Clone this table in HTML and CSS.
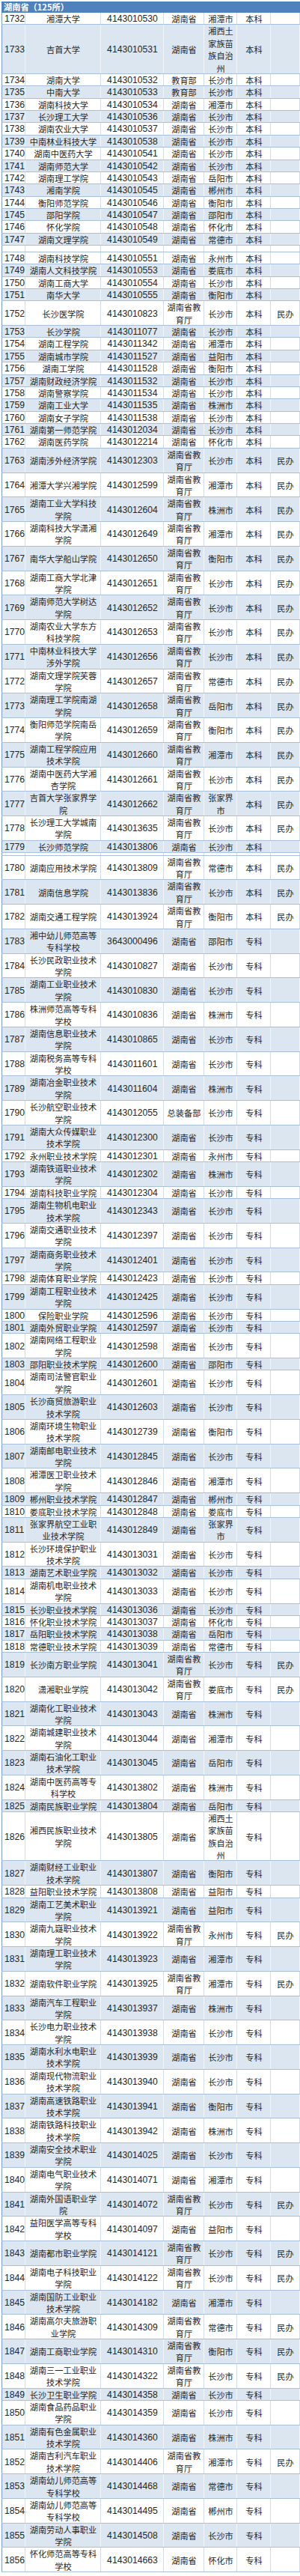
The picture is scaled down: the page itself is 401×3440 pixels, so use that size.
FILE: index.html
```html
<!DOCTYPE html>
<html lang="zh-CN">
<head>
<meta charset="utf-8">
<title>湖南省（125所）</title>
<link rel="stylesheet" href="styles.css">
</head>
<body>
<div class="sheet">
<table class="list">
<colgroup><col class="w1"><col class="w2"><col class="w3"><col class="w4"><col class="w5"><col class="w6"><col class="w7"></colgroup>
<thead><tr><th colspan="7" class="title">湖南省（125所）</th></tr></thead>
<tbody>
<tr class="w"><td class="n">1732</td><td>湘潭大学</td><td class="cd">4143010530</td><td>湖南省</td><td>湘潭市</td><td>本科</td><td></td></tr>
<tr class="b"><td class="n">1733</td><td>吉首大学</td><td class="cd">4143010531</td><td>湖南省</td><td>湘西土家族苗族自治州</td><td>本科</td><td></td></tr>
<tr class="w"><td class="n">1734</td><td>湖南大学</td><td class="cd">4143010532</td><td>教育部</td><td>长沙市</td><td>本科</td><td></td></tr>
<tr class="b"><td class="n">1735</td><td>中南大学</td><td class="cd">4143010533</td><td>教育部</td><td>长沙市</td><td>本科</td><td></td></tr>
<tr class="w"><td class="n">1736</td><td>湖南科技大学</td><td class="cd">4143010534</td><td>湖南省</td><td>湘潭市</td><td>本科</td><td></td></tr>
<tr class="b"><td class="n">1737</td><td>长沙理工大学</td><td class="cd">4143010536</td><td>湖南省</td><td>长沙市</td><td>本科</td><td></td></tr>
<tr class="w"><td class="n">1738</td><td>湖南农业大学</td><td class="cd">4143010537</td><td>湖南省</td><td>长沙市</td><td>本科</td><td></td></tr>
<tr class="b"><td class="n">1739</td><td>中南林业科技大学</td><td class="cd">4143010538</td><td>湖南省</td><td>长沙市</td><td>本科</td><td></td></tr>
<tr class="w"><td class="n">1740</td><td>湖南中医药大学</td><td class="cd">4143010541</td><td>湖南省</td><td>长沙市</td><td>本科</td><td></td></tr>
<tr class="b"><td class="n">1741</td><td>湖南师范大学</td><td class="cd">4143010542</td><td>湖南省</td><td>长沙市</td><td>本科</td><td></td></tr>
<tr class="w"><td class="n">1742</td><td>湖南理工学院</td><td class="cd">4143010543</td><td>湖南省</td><td>岳阳市</td><td>本科</td><td></td></tr>
<tr class="b"><td class="n">1743</td><td>湘南学院</td><td class="cd">4143010545</td><td>湖南省</td><td>郴州市</td><td>本科</td><td></td></tr>
<tr class="w"><td class="n">1744</td><td>衡阳师范学院</td><td class="cd">4143010546</td><td>湖南省</td><td>衡阳市</td><td>本科</td><td></td></tr>
<tr class="b"><td class="n">1745</td><td>邵阳学院</td><td class="cd">4143010547</td><td>湖南省</td><td>邵阳市</td><td>本科</td><td></td></tr>
<tr class="w"><td class="n">1746</td><td>怀化学院</td><td class="cd">4143010548</td><td>湖南省</td><td>怀化市</td><td>本科</td><td></td></tr>
<tr class="b"><td class="n">1747</td><td>湖南文理学院</td><td class="cd">4143010549</td><td>湖南省</td><td>常德市</td><td>本科</td><td></td></tr>
<tr class="gap gap1"><td></td><td></td><td></td><td></td><td></td><td></td><td></td></tr>
<tr class="w"><td class="n">1748</td><td>湖南科技学院</td><td class="cd">4143010551</td><td>湖南省</td><td>永州市</td><td>本科</td><td></td></tr>
<tr class="b"><td class="n">1749</td><td>湖南人文科技学院</td><td class="cd">4143010553</td><td>湖南省</td><td>娄底市</td><td>本科</td><td></td></tr>
<tr class="w"><td class="n">1750</td><td>湖南工商大学</td><td class="cd">4143010554</td><td>湖南省</td><td>长沙市</td><td>本科</td><td></td></tr>
<tr class="b"><td class="n">1751</td><td>南华大学</td><td class="cd">4143010555</td><td>湖南省</td><td>衡阳市</td><td>本科</td><td></td></tr>
<tr class="w"><td class="n">1752</td><td>长沙医学院</td><td class="cd">4143010823</td><td>湖南省教育厅</td><td>长沙市</td><td>本科</td><td>民办</td></tr>
<tr class="b"><td class="n">1753</td><td>长沙学院</td><td class="cd">4143011077</td><td>湖南省</td><td>长沙市</td><td>本科</td><td></td></tr>
<tr class="w"><td class="n">1754</td><td>湖南工程学院</td><td class="cd">4143011342</td><td>湖南省</td><td>湘潭市</td><td>本科</td><td></td></tr>
<tr class="b"><td class="n">1755</td><td>湖南城市学院</td><td class="cd">4143011527</td><td>湖南省</td><td>益阳市</td><td>本科</td><td></td></tr>
<tr class="w"><td class="n">1756</td><td>湖南工学院</td><td class="cd">4143011528</td><td>湖南省</td><td>衡阳市</td><td>本科</td><td></td></tr>
<tr class="b"><td class="n">1757</td><td>湖南财政经济学院</td><td class="cd">4143011532</td><td>湖南省</td><td>长沙市</td><td>本科</td><td></td></tr>
<tr class="w"><td class="n">1758</td><td>湖南警察学院</td><td class="cd">4143011534</td><td>湖南省</td><td>长沙市</td><td>本科</td><td></td></tr>
<tr class="b"><td class="n">1759</td><td>湖南工业大学</td><td class="cd">4143011535</td><td>湖南省</td><td>株洲市</td><td>本科</td><td></td></tr>
<tr class="w"><td class="n">1760</td><td>湖南女子学院</td><td class="cd">4143011538</td><td>湖南省</td><td>长沙市</td><td>本科</td><td></td></tr>
<tr class="b"><td class="n">1761</td><td>湖南第一师范学院</td><td class="cd">4143012034</td><td>湖南省</td><td>长沙市</td><td>本科</td><td></td></tr>
<tr class="w"><td class="n">1762</td><td>湖南医药学院</td><td class="cd">4143012214</td><td>湖南省</td><td>怀化市</td><td>本科</td><td></td></tr>
<tr class="b"><td class="n">1763</td><td>湖南涉外经济学院</td><td class="cd">4143012303</td><td>湖南省教育厅</td><td>长沙市</td><td>本科</td><td>民办</td></tr>
<tr class="w"><td class="n">1764</td><td>湘潭大学兴湘学院</td><td class="cd">4143012599</td><td>湖南省教育厅</td><td>湘潭市</td><td>本科</td><td>民办</td></tr>
<tr class="b"><td class="n">1765</td><td>湖南工业大学科技学院</td><td class="cd">4143012604</td><td>湖南省教育厅</td><td>株洲市</td><td>本科</td><td>民办</td></tr>
<tr class="w"><td class="n">1766</td><td>湖南科技大学潇湘学院</td><td class="cd">4143012649</td><td>湖南省教育厅</td><td>湘潭市</td><td>本科</td><td>民办</td></tr>
<tr class="b"><td class="n">1767</td><td>南华大学船山学院</td><td class="cd">4143012650</td><td>湖南省教育厅</td><td>衡阳市</td><td>本科</td><td>民办</td></tr>
<tr class="w"><td class="n">1768</td><td>湖南工商大学北津学院</td><td class="cd">4143012651</td><td>湖南省教育厅</td><td>长沙市</td><td>本科</td><td>民办</td></tr>
<tr class="b"><td class="n">1769</td><td>湖南师范大学树达学院</td><td class="cd">4143012652</td><td>湖南省教育厅</td><td>长沙市</td><td>本科</td><td>民办</td></tr>
<tr class="w"><td class="n">1770</td><td>湖南农业大学东方科技学院</td><td class="cd">4143012653</td><td>湖南省教育厅</td><td>长沙市</td><td>本科</td><td>民办</td></tr>
<tr class="b"><td class="n">1771</td><td>中南林业科技大学涉外学院</td><td class="cd">4143012656</td><td>湖南省教育厅</td><td>长沙市</td><td>本科</td><td>民办</td></tr>
<tr class="w"><td class="n">1772</td><td>湖南文理学院芙蓉学院</td><td class="cd">4143012657</td><td>湖南省教育厅</td><td>常德市</td><td>本科</td><td>民办</td></tr>
<tr class="b"><td class="n">1773</td><td>湖南理工学院南湖学院</td><td class="cd">4143012658</td><td>湖南省教育厅</td><td>岳阳市</td><td>本科</td><td>民办</td></tr>
<tr class="w"><td class="n">1774</td><td>衡阳师范学院南岳学院</td><td class="cd">4143012659</td><td>湖南省教育厅</td><td>衡阳市</td><td>本科</td><td>民办</td></tr>
<tr class="b"><td class="n">1775</td><td>湖南工程学院应用技术学院</td><td class="cd">4143012660</td><td>湖南省教育厅</td><td>湘潭市</td><td>本科</td><td>民办</td></tr>
<tr class="w"><td class="n">1776</td><td>湖南中医药大学湘杏学院</td><td class="cd">4143012661</td><td>湖南省教育厅</td><td>长沙市</td><td>本科</td><td>民办</td></tr>
<tr class="b"><td class="n">1777</td><td>吉首大学张家界学院</td><td class="cd">4143012662</td><td>湖南省教育厅</td><td>张家界市</td><td>本科</td><td>民办</td></tr>
<tr class="w"><td class="n">1778</td><td>长沙理工大学城南学院</td><td class="cd">4143013635</td><td>湖南省教育厅</td><td>长沙市</td><td>本科</td><td>民办</td></tr>
<tr class="b"><td class="n">1779</td><td>长沙师范学院</td><td class="cd">4143013806</td><td>湖南省</td><td>长沙市</td><td>本科</td><td></td></tr>
<tr class="gap gap2"><td></td><td></td><td></td><td></td><td></td><td></td><td></td></tr>
<tr class="w"><td class="n">1780</td><td>湖南应用技术学院</td><td class="cd">4143013809</td><td>湖南省教育厅</td><td>常德市</td><td>本科</td><td>民办</td></tr>
<tr class="b"><td class="n">1781</td><td>湖南信息学院</td><td class="cd">4143013836</td><td>湖南省教育厅</td><td>长沙市</td><td>本科</td><td>民办</td></tr>
<tr class="w"><td class="n">1782</td><td>湖南交通工程学院</td><td class="cd">4143013924</td><td>湖南省教育厅</td><td>衡阳市</td><td>本科</td><td>民办</td></tr>
<tr class="b"><td class="n">1783</td><td>湘中幼儿师范高等专科学校</td><td class="cd">3643000496</td><td>湖南省</td><td>邵阳市</td><td>专科</td><td></td></tr>
<tr class="w"><td class="n">1784</td><td>长沙民政职业技术学院</td><td class="cd">4143010827</td><td>湖南省</td><td>长沙市</td><td>专科</td><td></td></tr>
<tr class="b"><td class="n">1785</td><td>湖南工业职业技术学院</td><td class="cd">4143010830</td><td>湖南省</td><td>长沙市</td><td>专科</td><td></td></tr>
<tr class="w"><td class="n">1786</td><td>株洲师范高等专科学校</td><td class="cd">4143010836</td><td>湖南省</td><td>株洲市</td><td>专科</td><td></td></tr>
<tr class="b"><td class="n">1787</td><td>湖南信息职业技术学院</td><td class="cd">4143010865</td><td>湖南省</td><td>长沙市</td><td>专科</td><td></td></tr>
<tr class="w"><td class="n">1788</td><td>湖南税务高等专科学校</td><td class="cd">4143011601</td><td>湖南省</td><td>长沙市</td><td>专科</td><td></td></tr>
<tr class="b"><td class="n">1789</td><td>湖南冶金职业技术学院</td><td class="cd">4143011604</td><td>湖南省</td><td>株洲市</td><td>专科</td><td></td></tr>
<tr class="w"><td class="n">1790</td><td>长沙航空职业技术学院</td><td class="cd">4143012055</td><td>总装备部</td><td>长沙市</td><td>专科</td><td></td></tr>
<tr class="b"><td class="n">1791</td><td>湖南大众传媒职业技术学院</td><td class="cd">4143012300</td><td>湖南省</td><td>长沙市</td><td>专科</td><td></td></tr>
<tr class="w"><td class="n">1792</td><td>永州职业技术学院</td><td class="cd">4143012301</td><td>湖南省</td><td>永州市</td><td>专科</td><td></td></tr>
<tr class="b"><td class="n">1793</td><td>湖南铁道职业技术学院</td><td class="cd">4143012302</td><td>湖南省</td><td>株洲市</td><td>专科</td><td></td></tr>
<tr class="w"><td class="n">1794</td><td>湖南科技职业学院</td><td class="cd">4143012304</td><td>湖南省</td><td>长沙市</td><td>专科</td><td></td></tr>
<tr class="b"><td class="n">1795</td><td>湖南生物机电职业技术学院</td><td class="cd">4143012343</td><td>湖南省</td><td>长沙市</td><td>专科</td><td></td></tr>
<tr class="w"><td class="n">1796</td><td>湖南交通职业技术学院</td><td class="cd">4143012397</td><td>湖南省</td><td>长沙市</td><td>专科</td><td></td></tr>
<tr class="b"><td class="n">1797</td><td>湖南商务职业技术学院</td><td class="cd">4143012401</td><td>湖南省</td><td>长沙市</td><td>专科</td><td></td></tr>
<tr class="w"><td class="n">1798</td><td>湖南体育职业学院</td><td class="cd">4143012423</td><td>湖南省</td><td>长沙市</td><td>专科</td><td></td></tr>
<tr class="b"><td class="n">1799</td><td>湖南工程职业技术学院</td><td class="cd">4143012425</td><td>湖南省</td><td>长沙市</td><td>专科</td><td></td></tr>
<tr class="w"><td class="n">1800</td><td>保险职业学院</td><td class="cd">4143012596</td><td>湖南省</td><td>长沙市</td><td>专科</td><td></td></tr>
<tr class="b"><td class="n">1801</td><td>湖南外贸职业学院</td><td class="cd">4143012597</td><td>湖南省</td><td>长沙市</td><td>专科</td><td></td></tr>
<tr class="w"><td class="n">1802</td><td>湖南网络工程职业学院</td><td class="cd">4143012598</td><td>湖南省</td><td>长沙市</td><td>专科</td><td></td></tr>
<tr class="b"><td class="n">1803</td><td>邵阳职业技术学院</td><td class="cd">4143012600</td><td>湖南省</td><td>邵阳市</td><td>专科</td><td></td></tr>
<tr class="w"><td class="n">1804</td><td>湖南司法警官职业学院</td><td class="cd">4143012601</td><td>湖南省</td><td>长沙市</td><td>专科</td><td></td></tr>
<tr class="b"><td class="n">1805</td><td>长沙商贸旅游职业技术学院</td><td class="cd">4143012603</td><td>湖南省</td><td>长沙市</td><td>专科</td><td></td></tr>
<tr class="w"><td class="n">1806</td><td>湖南环境生物职业技术学院</td><td class="cd">4143012739</td><td>湖南省</td><td>衡阳市</td><td>专科</td><td></td></tr>
<tr class="b"><td class="n">1807</td><td>湖南邮电职业技术学院</td><td class="cd">4143012845</td><td>湖南省</td><td>长沙市</td><td>专科</td><td></td></tr>
<tr class="w"><td class="n">1808</td><td>湘潭医卫职业技术学院</td><td class="cd">4143012846</td><td>湖南省</td><td>湘潭市</td><td>专科</td><td></td></tr>
<tr class="b"><td class="n">1809</td><td>郴州职业技术学院</td><td class="cd">4143012847</td><td>湖南省</td><td>郴州市</td><td>专科</td><td></td></tr>
<tr class="w"><td class="n">1810</td><td>娄底职业技术学院</td><td class="cd">4143012848</td><td>湖南省</td><td>娄底市</td><td>专科</td><td></td></tr>
<tr class="b"><td class="n">1811</td><td>张家界航空工业职业技术学院</td><td class="cd">4143012849</td><td>湖南省</td><td>张家界市</td><td>专科</td><td></td></tr>
<tr class="w"><td class="n">1812</td><td>长沙环境保护职业技术学院</td><td class="cd">4143013031</td><td>湖南省</td><td>长沙市</td><td>专科</td><td></td></tr>
<tr class="b"><td class="n">1813</td><td>湖南艺术职业学院</td><td class="cd">4143013032</td><td>湖南省</td><td>长沙市</td><td>专科</td><td></td></tr>
<tr class="w"><td class="n">1814</td><td>湖南机电职业技术学院</td><td class="cd">4143013033</td><td>湖南省</td><td>长沙市</td><td>专科</td><td></td></tr>
<tr class="b"><td class="n">1815</td><td>长沙职业技术学院</td><td class="cd">4143013036</td><td>湖南省</td><td>长沙市</td><td>专科</td><td></td></tr>
<tr class="w"><td class="n">1816</td><td>怀化职业技术学院</td><td class="cd">4143013037</td><td>湖南省</td><td>怀化市</td><td>专科</td><td></td></tr>
<tr class="b"><td class="n">1817</td><td>岳阳职业技术学院</td><td class="cd">4143013038</td><td>湖南省</td><td>岳阳市</td><td>专科</td><td></td></tr>
<tr class="w"><td class="n">1818</td><td>常德职业技术学院</td><td class="cd">4143013039</td><td>湖南省</td><td>常德市</td><td>专科</td><td></td></tr>
<tr class="b"><td class="n">1819</td><td>长沙南方职业学院</td><td class="cd">4143013041</td><td>湖南省教育厅</td><td>长沙市</td><td>专科</td><td>民办</td></tr>
<tr class="w"><td class="n">1820</td><td>潇湘职业学院</td><td class="cd">4143013042</td><td>湖南省教育厅</td><td>娄底市</td><td>专科</td><td>民办</td></tr>
<tr class="b"><td class="n">1821</td><td>湖南化工职业技术学院</td><td class="cd">4143013043</td><td>湖南省</td><td>株洲市</td><td>专科</td><td></td></tr>
<tr class="w"><td class="n">1822</td><td>湖南城建职业技术学院</td><td class="cd">4143013044</td><td>湖南省</td><td>湘潭市</td><td>专科</td><td></td></tr>
<tr class="b"><td class="n">1823</td><td>湖南石油化工职业技术学院</td><td class="cd">4143013045</td><td>湖南省</td><td>岳阳市</td><td>专科</td><td></td></tr>
<tr class="w"><td class="n">1824</td><td>湖南中医药高等专科学校</td><td class="cd">4143013802</td><td>湖南省</td><td>株洲市</td><td>专科</td><td></td></tr>
<tr class="b"><td class="n">1825</td><td>湖南民族职业学院</td><td class="cd">4143013804</td><td>湖南省</td><td>岳阳市</td><td>专科</td><td></td></tr>
<tr class="w"><td class="n">1826</td><td>湘西民族职业技术学院</td><td class="cd">4143013805</td><td>湖南省</td><td>湘西土家族苗族自治州</td><td>专科</td><td></td></tr>
<tr class="b"><td class="n">1827</td><td>湖南财经工业职业技术学院</td><td class="cd">4143013807</td><td>湖南省</td><td>衡阳市</td><td>专科</td><td></td></tr>
<tr class="w"><td class="n">1828</td><td>益阳职业技术学院</td><td class="cd">4143013808</td><td>湖南省</td><td>益阳市</td><td>专科</td><td></td></tr>
<tr class="b"><td class="n">1829</td><td>湖南工艺美术职业学院</td><td class="cd">4143013921</td><td>湖南省</td><td>益阳市</td><td>专科</td><td></td></tr>
<tr class="w"><td class="n">1830</td><td>湖南九嶷职业技术学院</td><td class="cd">4143013922</td><td>湖南省教育厅</td><td>永州市</td><td>专科</td><td>民办</td></tr>
<tr class="b"><td class="n">1831</td><td>湖南理工职业技术学院</td><td class="cd">4143013923</td><td>湖南省</td><td>湘潭市</td><td>专科</td><td></td></tr>
<tr class="w"><td class="n">1832</td><td>湖南软件职业学院</td><td class="cd">4143013925</td><td>湖南省教育厅</td><td>湘潭市</td><td>专科</td><td>民办</td></tr>
<tr class="b"><td class="n">1833</td><td>湖南汽车工程职业学院</td><td class="cd">4143013937</td><td>湖南省</td><td>株洲市</td><td>专科</td><td></td></tr>
<tr class="w"><td class="n">1834</td><td>长沙电力职业技术学院</td><td class="cd">4143013938</td><td>湖南省</td><td>长沙市</td><td>专科</td><td></td></tr>
<tr class="b"><td class="n">1835</td><td>湖南水利水电职业技术学院</td><td class="cd">4143013939</td><td>湖南省</td><td>长沙市</td><td>专科</td><td></td></tr>
<tr class="w"><td class="n">1836</td><td>湖南现代物流职业技术学院</td><td class="cd">4143013940</td><td>湖南省</td><td>长沙市</td><td>专科</td><td></td></tr>
<tr class="b"><td class="n">1837</td><td>湖南高速铁路职业技术学院</td><td class="cd">4143013941</td><td>湖南省</td><td>衡阳市</td><td>专科</td><td></td></tr>
<tr class="w"><td class="n">1838</td><td>湖南铁路科技职业技术学院</td><td class="cd">4143013942</td><td>湖南省</td><td>株洲市</td><td>专科</td><td></td></tr>
<tr class="b"><td class="n">1839</td><td>湖南安全技术职业学院</td><td class="cd">4143014025</td><td>湖南省</td><td>长沙市</td><td>专科</td><td></td></tr>
<tr class="w"><td class="n">1840</td><td>湖南电气职业技术学院</td><td class="cd">4143014071</td><td>湖南省</td><td>湘潭市</td><td>专科</td><td></td></tr>
<tr class="b"><td class="n">1841</td><td>湖南外国语职业学院</td><td class="cd">4143014072</td><td>湖南省教育厅</td><td>长沙市</td><td>专科</td><td>民办</td></tr>
<tr class="w"><td class="n">1842</td><td>益阳医学高等专科学校</td><td class="cd">4143014097</td><td>湖南省</td><td>益阳市</td><td>专科</td><td></td></tr>
<tr class="b"><td class="n">1843</td><td>湖南都市职业学院</td><td class="cd">4143014121</td><td>湖南省教育厅</td><td>长沙市</td><td>专科</td><td>民办</td></tr>
<tr class="w"><td class="n">1844</td><td>湖南电子科技职业学院</td><td class="cd">4143014122</td><td>湖南省教育厅</td><td>长沙市</td><td>专科</td><td>民办</td></tr>
<tr class="b"><td class="n">1845</td><td>湖南国防工业职业技术学院</td><td class="cd">4143014182</td><td>湖南省</td><td>湘潭市</td><td>专科</td><td></td></tr>
<tr class="w"><td class="n">1846</td><td>湖南高尔夫旅游职业学院</td><td class="cd">4143014309</td><td>湖南省教育厅</td><td>常德市</td><td>专科</td><td>民办</td></tr>
<tr class="b"><td class="n">1847</td><td>湖南工商职业学院</td><td class="cd">4143014310</td><td>湖南省教育厅</td><td>衡阳市</td><td>专科</td><td>民办</td></tr>
<tr class="w"><td class="n">1848</td><td>湖南三一工业职业技术学院</td><td class="cd">4143014322</td><td>湖南省教育厅</td><td>长沙市</td><td>专科</td><td>民办</td></tr>
<tr class="b"><td class="n">1849</td><td>长沙卫生职业学院</td><td class="cd">4143014358</td><td>湖南省</td><td>长沙市</td><td>专科</td><td></td></tr>
<tr class="w"><td class="n">1850</td><td>湖南食品药品职业学院</td><td class="cd">4143014359</td><td>湖南省</td><td>长沙市</td><td>专科</td><td></td></tr>
<tr class="b"><td class="n">1851</td><td>湖南有色金属职业技术学院</td><td class="cd">4143014360</td><td>湖南省</td><td>株洲市</td><td>专科</td><td></td></tr>
<tr class="w"><td class="n">1852</td><td>湖南吉利汽车职业技术学院</td><td class="cd">4143014406</td><td>湖南省教育厅</td><td>湘潭市</td><td>专科</td><td>民办</td></tr>
<tr class="b"><td class="n">1853</td><td>湖南幼儿师范高等专科学校</td><td class="cd">4143014468</td><td>湖南省</td><td>常德市</td><td>专科</td><td></td></tr>
<tr class="w"><td class="n">1854</td><td>湖南幼儿师范高等专科学校</td><td class="cd">4143014495</td><td>湖南省</td><td>郴州市</td><td>专科</td><td></td></tr>
<tr class="b"><td class="n">1855</td><td>湖南劳动人事职业学院</td><td class="cd">4143014508</td><td>湖南省</td><td>长沙市</td><td>专科</td><td></td></tr>
<tr class="w"><td class="n">1856</td><td>怀化师范高等专科学校</td><td class="cd">4143014663</td><td>湖南省</td><td>怀化市</td><td>专科</td><td></td></tr>
</tbody>
</table>
</div>
</body>
</html>
```
FILE: styles.css
```css
html, body {
  margin: 0;
  padding: 0;
  background: #ffffff;
}

.sheet {
  width: 401px;
  overflow: hidden;
  padding: 2px 0 0 2px;
  box-sizing: border-box;
}

.list {
  width: 399px;
  table-layout: fixed;
  border-collapse: separate;
  border-spacing: 0;
  font-family: "Noto Sans CJK SC", sans-serif;
  font-size: 11.2px;
  color: #262626;
}

.w1 { width: 32px; }
.w2 { width: 101px; }
.w3 { width: 84px; }
.w4 { width: 54px; }
.w5 { width: 44px; }
.w6 { width: 45px; }
.w7 { width: 39px; }

.title {
  background: #4f81bd;
  color: #ffffff;
  font-weight: bold;
  text-align: left;
  padding: 0 0 0 3px;
  height: 15px;
  line-height: 15px;
  font-size: 11.2px;
}

.list td {
  padding: 0 2px;
  line-height: 16.38px;
  text-align: center;
  vertical-align: middle;
  word-break: break-all;
  box-shadow: inset 0 -1px 0 #a9c0dd, inset -1px 0 0 #d3dbe6;
}

.list tr.b td {
  background: #dce6f1;
  box-shadow: inset 0 -1px 0 #a9c0dd, inset -1px 0 0 #f2f6fb;
}

.list td:first-child {
  box-shadow: inset 0 -1px 0 #a9c0dd, inset -1px 0 0 #d3dbe6, inset 1px 0 0 #7b9dc8;
}

.list tr.b td:first-child {
  box-shadow: inset 0 -1px 0 #a9c0dd, inset -1px 0 0 #f2f6fb, inset 1px 0 0 #7b9dc8;
}

.list td.n {
  text-align: left;
  padding: 0 0 0 4px;
  font-family: "Liberation Sans", "Noto Sans CJK SC", sans-serif;
  font-size: 12.2px;
  white-space: nowrap;
}

.list td.cd {
  font-family: "Liberation Sans", "Noto Sans CJK SC", sans-serif;
  font-size: 12.2px;
  white-space: nowrap;
}

.list tr.gap td {
  padding: 0;
  line-height: 0;
  font-size: 0;
  background: #ffffff;
}

.list tr.gap1 td {
  height: 8.7px;
}

.list tr.gap2 td {
  height: 3.5px;
}
```
